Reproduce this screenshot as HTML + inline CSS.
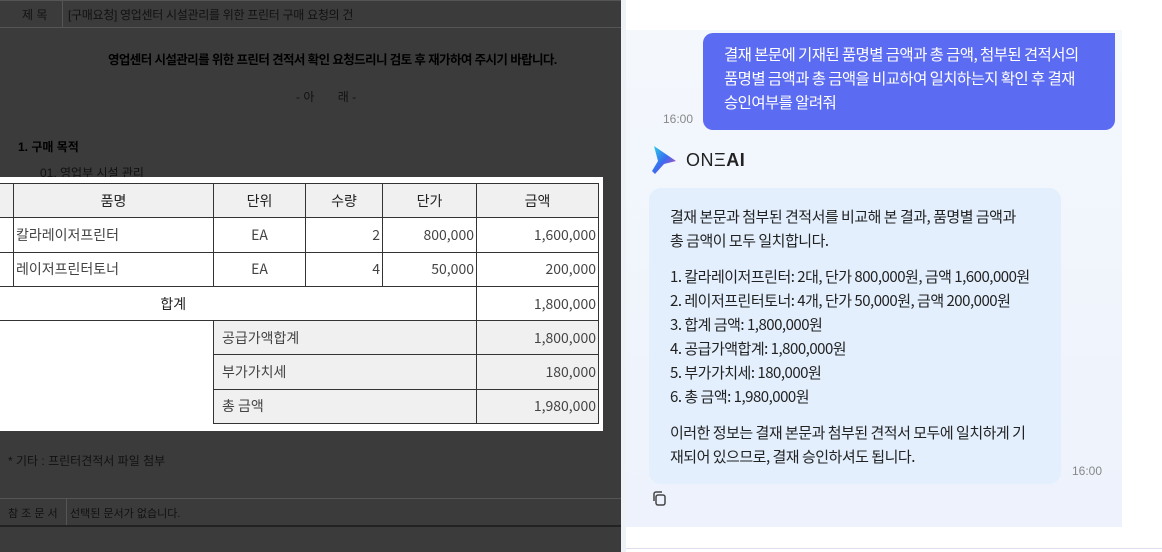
<!DOCTYPE html>
<html><head><meta charset="utf-8"><style>
*{margin:0;padding:0;box-sizing:border-box}
body{width:1162px;height:552px;overflow:hidden;background:#fff;font-family:"Liberation Sans","Noto Sans CJK KR",sans-serif;position:relative}
.left{position:absolute;left:0;top:0;width:621px;height:552px;background:#3b3b3b;color:#111}
.a{position:absolute;white-space:nowrap}
.line{position:absolute;background:#2a2a2a}
.panel{position:absolute;left:0;top:177px;width:603px;height:254px;background:#fff}
table{position:absolute;left:-2px;top:183px;border-collapse:collapse;font-family:"Noto Sans CJK KR",sans-serif;font-size:14px;color:#444}
td{border:1.5px solid #333;height:34.3px;padding:0 2px}
.g{background:#f0f0f0}
.r{text-align:right}.c{text-align:center}
.chat{position:absolute;left:626px;top:30px;width:496px;height:497px;background:linear-gradient(180deg,#f4f8fd,#edf2fc)}
.ub{position:absolute;left:703px;top:33px;width:412px;height:97px;background:#5c6cf2;border-radius:10px 0 10px 10px;color:#fff;font-size:15.5px;line-height:24px;padding:9px 0 0 21px;font-family:"Noto Sans CJK KR",sans-serif;letter-spacing:-0.6px}
.ab{position:absolute;left:649px;top:188px;width:412px;height:296px;background:#e3effd;border-radius:12px;color:#222;font-size:15px;line-height:24px;padding:17px 0 0 21px;font-family:"Noto Sans CJK KR",sans-serif;letter-spacing:-0.5px}
.t{position:absolute;font-size:12px;color:#888;font-family:"Liberation Sans",sans-serif}
</style></head><body>
<div class="left">
 <div class="line" style="left:0;top:0;width:621px;height:1px;background:#555"></div>
 <div class="line" style="left:0;top:27px;width:621px;height:1px;background:#555"></div>
 <div class="line" style="left:62px;top:0;width:1px;height:27px;background:#555"></div>
 <div class="a" style="left:22px;top:6px;font-size:12px;color:#111">제 목</div>
 <div class="a" style="left:68px;top:6px;font-size:12px;color:#111;letter-spacing:-0.3px">[구매요청] 영업센터 시설관리를 위한 프린터 구매 요청의 건</div>
 <div class="a" style="left:108px;top:49px;font-size:12.5px;font-weight:bold;color:#000;letter-spacing:-0.6px">영업센터 시설관리를 위한 프린터 견적서 확인 요청드리니 검토 후 재가하여 주시기 바랍니다.</div>
 <div class="a" style="left:296px;top:88px;font-size:12px;color:#111">- 아 &nbsp; &nbsp; &nbsp; 래 -</div>
 <div class="a" style="left:18px;top:138px;font-size:12px;color:#000;font-weight:bold">1. 구매 목적</div>
 <div class="a" style="left:40px;top:164px;font-size:12px;color:#111">01. 영업부 시설 관리</div>
 <div class="panel"></div>
 <table>
  <tr class="g" style="color:#222"><td style="width:15px"></td><td class="c" style="width:200px">품명</td><td class="c" style="width:92px">단위</td><td class="c" style="width:77px">수량</td><td class="c" style="width:94px">단가</td><td class="c" style="width:122px">금액</td></tr>
  <tr><td></td><td>칼라레이저프린터</td><td class="c">EA</td><td class="r">2</td><td class="r">800,000</td><td class="r">1,600,000</td></tr>
  <tr><td></td><td>레이저프린터토너</td><td class="c">EA</td><td class="r">4</td><td class="r">50,000</td><td class="r">200,000</td></tr>
  <tr><td colspan="5" class="c" style="border-left:none;color:#222;padding-right:130px">합계</td><td class="r">1,800,000</td></tr>
  <tr><td colspan="2" rowspan="3" style="border-left:none;border-bottom:none"></td><td colspan="3" class="g" style="padding-left:8px">공급가액합계</td><td class="r g">1,800,000</td></tr>
  <tr><td colspan="3" class="g" style="padding-left:8px">부가가치세</td><td class="r g">180,000</td></tr>
  <tr><td colspan="3" class="g" style="padding-left:8px">총 금액</td><td class="r g">1,980,000</td></tr>
 </table>
 <div class="a" style="left:8px;top:452px;font-size:12px;color:#111">* 기타 : 프린터견적서 파일 첨부</div>
 <div class="line" style="left:0;top:498px;width:621px;height:1px;background:#555"></div>
 <div class="line" style="left:0;top:525px;width:621px;height:2px;background:#222"></div>
 <div class="line" style="left:66px;top:498px;width:1px;height:27px;background:#555"></div>
 <div class="a" style="left:8px;top:505px;font-size:11px;color:#111">참 조 문 서</div>
 <div class="a" style="left:70px;top:505px;font-size:11px;color:#111">선택된 문서가 없습니다.</div>
</div>
<div style="position:absolute;left:621px;top:0;width:5px;height:552px;background:#eef1f6"></div>
<div class="chat"></div>
<div class="ub">결재 본문에 기재된 품명별 금액과 총 금액, 첨부된 견적서의<br>품명별 금액과 총 금액을 비교하여 일치하는지 확인 후 결재<br>승인여부를 알려줘</div>
<div class="t" style="left:663px;top:112px">16:00</div>
<svg style="position:absolute;left:650px;top:144px" width="30" height="32" viewBox="0 0 30 32">
 <defs><linearGradient id="g1" x1="0" y1="0" x2="1" y2="1"><stop offset="0" stop-color="#27d3e8"/><stop offset="0.5" stop-color="#3a6cf0"/><stop offset="1" stop-color="#e33fa8"/></linearGradient></defs>
 <path d="M4 2 L26 17 L14 20 L5 30 L2 27 L8 17 Z" fill="url(#g1)"/>
</svg>
<div class="a" style="left:686px;top:150px;font-size:18px;color:#222;letter-spacing:0.5px">ONΞ<b>AI</b></div>
<div class="ab">결재 본문과 첨부된 견적서를 비교해 본 결과, 품명별 금액과<br>총 금액이 모두 일치합니다.<div style="height:12px"></div>1. 칼라레이저프린터: 2대, 단가 800,000원, 금액 1,600,000원<br>2. 레이저프린터토너: 4개, 단가 50,000원, 금액 200,000원<br>3. 합계 금액: 1,800,000원<br>4. 공급가액합계: 1,800,000원<br>5. 부가가치세: 180,000원<br>6. 총 금액: 1,980,000원<div style="height:12px"></div>이러한 정보는 결재 본문과 첨부된 견적서 모두에 일치하게 기<br>재되어 있으므로, 결재 승인하셔도 됩니다.</div>
<div class="t" style="left:1072px;top:464px">16:00</div>
<svg style="position:absolute;left:651px;top:490px" width="18" height="18" viewBox="0 0 18 18" fill="none" stroke="#444" stroke-width="1.5"><rect x="5" y="5" width="9" height="10" rx="2"/><path d="M3 11V4a2 2 0 0 1 2-2h6"/></svg>
<div style="position:absolute;left:626px;top:548px;width:536px;height:1px;background:#dde"></div>
</body></html>
